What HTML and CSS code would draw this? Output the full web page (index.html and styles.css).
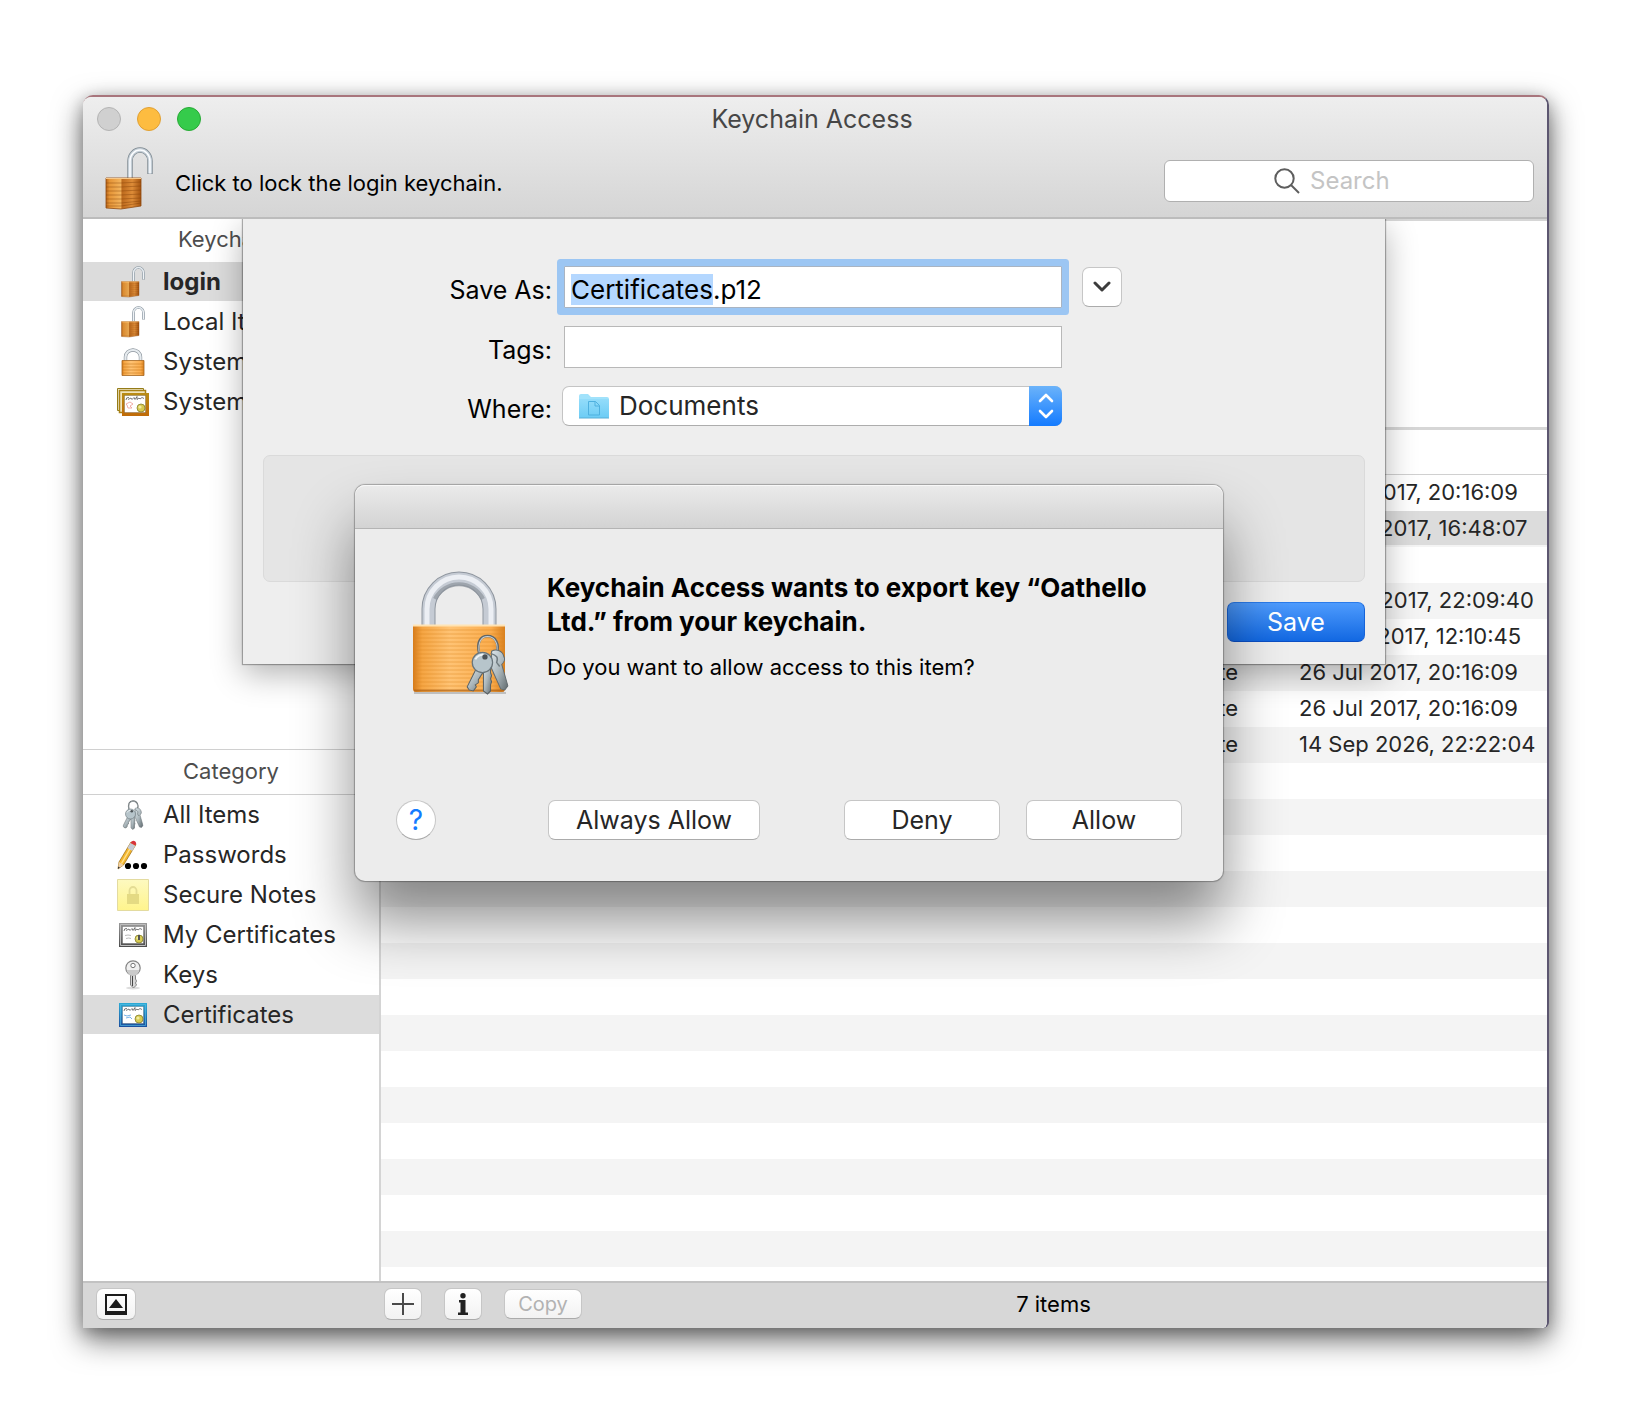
FILE: index.html
```html
<!DOCTYPE html>
<html lang="en">
<head>
<meta charset="utf-8">
<title>Keychain Access</title>
<link rel="stylesheet" href="styles.css">
</head>
<body>
<svg class="defs" aria-hidden="true">
  <defs>
    <linearGradient id="brass" x1="0" y1="0" x2="1" y2="0">
      <stop offset="0" stop-color="#b9661a"/><stop offset=".1" stop-color="#e59436"/><stop offset=".42" stop-color="#f3b35c"/><stop offset=".46" stop-color="#bd6a1d"/><stop offset=".75" stop-color="#dd8c38"/><stop offset="1" stop-color="#a4530f"/>
    </linearGradient>
    <linearGradient id="gold" x1="0" y1="0" x2="1" y2="0">
      <stop offset="0" stop-color="#d67a1a"/><stop offset=".1" stop-color="#f5a543"/><stop offset=".4" stop-color="#ffc374"/><stop offset=".85" stop-color="#fbad4e"/><stop offset="1" stop-color="#d9801e"/>
    </linearGradient>
    <linearGradient id="key" x1="0" y1="0" x2="1" y2="1">
      <stop offset="0" stop-color="#dde6ea"/><stop offset=".5" stop-color="#a9b5ba"/><stop offset="1" stop-color="#606a6e"/>
    </linearGradient>
    <linearGradient id="frame-blue" x1="0" y1="0" x2="0" y2="1"><stop offset="0" stop-color="#2cabd6"/><stop offset="1" stop-color="#1a4f9f"/></linearGradient>
    <linearGradient id="frame-gray" x1="0" y1="0" x2="0" y2="1"><stop offset="0" stop-color="#9a9a9a"/><stop offset="1" stop-color="#4c4c4c"/></linearGradient>
    <linearGradient id="frame-gold" x1="0" y1="0" x2="0" y2="1"><stop offset="0" stop-color="#b98d14"/><stop offset="1" stop-color="#c06a08"/></linearGradient>
    <linearGradient id="note" x1="0" y1="0" x2="0" y2="1"><stop offset="0" stop-color="#fdf9c0"/><stop offset="1" stop-color="#fff48c"/></linearGradient>
    <linearGradient id="folder" x1="0" y1="0" x2="0" y2="1"><stop offset="0" stop-color="#93dcfa"/><stop offset="1" stop-color="#6cccf5"/></linearGradient>

    <symbol id="lock-open" viewBox="0 0 48 64">
      <path d="M25 31V14a10 11 0 0 1 20 0V27" fill="none" stroke="#7d8890" stroke-width="5.400"/>
      <path d="M25 31V14a10 11 0 0 1 20 0V26.500" fill="none" stroke="#c3cdd5" stroke-width="4"/>
      <path d="M25 31V14a10 11 0 0 1 20 0V26.500" fill="none" stroke="#fbfdff" stroke-width="1.600"/>
      <path d="M1 31h35v28l-20 3-15-1z" fill="url(#brass)" stroke="#8f4a10" stroke-width=".8"/>
      <path d="M1 36h15l20-1M1 40h15l20-1M1 44h15l20-1M1 48h15l20-1M1 52h15l20-1M1 56h15l20-2M1 59h15l20-3" fill="none" stroke="#7c3c06" stroke-opacity=".4" stroke-width="1"/>
      <path d="M1 31.500h35" stroke="#f7c88a" stroke-width="1.200"/>
    </symbol>
    <symbol id="lock-closed" viewBox="0 0 24 28">
      <path d="M4.500 13V9a7.500 7 0 0 1 15 0v4" fill="none" stroke="#8c959d" stroke-width="3.400"/>
      <path d="M4.500 13V9a7.500 7 0 0 1 15 0v4" fill="none" stroke="#e6ebef" stroke-width="2.200"/>
      <path d="M1 12.500h22V27.500H1z" fill="url(#gold)" stroke="#a5661f" stroke-width=".8"/>
      <path d="M1 16h22M1 19h22M1 22h22M1 25h22" stroke="#c17418" stroke-opacity=".6" stroke-width=".9"/>
    </symbol>
    <symbol id="keyring" viewBox="0 0 42 60">
      <path d="M13 20C10 8 14 2 21 2c8 0 12 8 9 17" fill="none" stroke="#5f6669" stroke-width="2.600"/>
      <path d="M13 19C11 8 15 2.500 21 2.500c7 0 11 7 9 16" fill="none" stroke="#c9d0d3" stroke-width="1"/>
      <path d="M25 17c5-3 11 0 12 5 2 3 0 6-2 8l6 21-3 4-4-1-9-20z" fill="url(#key)" stroke="#636c70" stroke-width="1"/>
      <path d="M10 34 1 52l2 3 4 1 3-4-1-2 3-2 0-3 7-11z" fill="url(#key)" stroke="#596164" stroke-width="1"/>
      <path d="M17 30h7v8l1 3-1 3 1 3-1 3v6l-3 3-4-3z" fill="url(#key)" stroke="#596164" stroke-width="1"/>
      <path d="M24 19c6 2 8 4 6 9l3 4" fill="none" stroke="#717c81" stroke-width="1.400"/>
      <circle cx="16" cy="28" r="10" fill="#b7c5cb" stroke="#69757b" stroke-width="1.200"/>
      <path d="M9 25a8 8 0 0 1 10-4" fill="none" stroke="#eef3f5" stroke-width="2"/>
      <circle cx="18.500" cy="22.500" r="2.600" fill="#4c5356"/>
    </symbol>
    <symbol id="cert" viewBox="0 0 28 24">
      <path d="M3.500 3.500h21v17h-21z" fill="#fff" stroke="#00000055" stroke-width=".6"/>
      <path d="M5 8q0-3 3-2.500M7 7.500l3-1.500 1 1.500 2-2 1 2 2-3v3l2-1.500 1 1 2-1.500 2 1" fill="none" stroke="#222" stroke-width=".6"/>
      <circle cx="20" cy="16" r="4" fill="#d6ca50" stroke="#85802c" stroke-width=".8"/>
      <circle cx="19" cy="15" r="1.600" fill="#f1eca1"/>
    </symbol>
  </defs>
</svg>

<main class="window">
  <header class="toolbar">
    <div class="titlebar">
      <div class="lights">
        <button class="light light-close" aria-label="Close"></button>
        <button class="light light-min" aria-label="Minimise"></button>
        <button class="light light-zoom" aria-label="Zoom"></button>
      </div>
      <h1 class="title">Keychain Access</h1>
    </div>
    <div class="tools">
      <button class="lock-button" aria-label="Lock keychain"><svg width="48" height="64"><use href="#lock-open"/></svg></button>
      <p class="lock-text">Click to lock the login keychain.</p>
      <label class="search">
        <svg width="26" height="26" viewBox="0 0 26 26" fill="none" stroke="#5e5e5e" stroke-width="2"><circle cx="10.500" cy="10.500" r="9.200"/><path d="m17 17 8 8"/></svg>
        <input class="search-input" type="text" placeholder="Search" aria-label="Search">
      </label>
    </div>
  </header>

  <div class="content">
    <aside class="sidebar">
      <section class="group">
        <h2 class="group-title">Keychains</h2>
        <ul class="items">
          <li><a class="item is-selected is-bold" href="#login"><span class="icon"><svg width="24" height="32"><use href="#lock-open"/></svg></span>login</a></li>
          <li><a class="item" href="#local"><span class="icon"><svg width="24" height="32"><use href="#lock-open"/></svg></span>Local Items</a></li>
          <li><a class="item" href="#system"><span class="icon"><svg width="24" height="28"><use href="#lock-closed"/></svg></span>System</a></li>
          <li><a class="item" href="#roots"><span class="icon"><svg width="32" height="28" viewBox="0 0 32 28"><path d="M.5.500h26v22H.500z" fill="#f1ead0" stroke="#957c18"/><path d="M2.500 2.500h26v22h-26z" fill="#f1e4bc" stroke="#a98216" stroke-width="1.500"/><path d="M5 5h27v23H5z" fill="url(#frame-gold)"/><svg x="4" y="4" width="28" height="24"><use href="#cert"/></svg><path d="M9 16l4-2 3 2-3 2 2 2-4 0-1-3z" fill="none" stroke="#ee9a94" stroke-width=".8"/></svg></span>System Roots</a></li>
        </ul>
      </section>
      <section class="group group-category">
        <h2 class="group-title">Category</h2>
        <ul class="items">
          <li><a class="item" href="#all"><span class="icon"><svg width="22" height="30" viewBox="0 0 42 60"><use href="#keyring"/></svg></span>All Items</a></li>
          <li><a class="item" href="#passwords"><span class="icon"><svg width="32" height="30" viewBox="0 0 32 30"><path d="M2 22 14 2l5 2.500L6.500 25 1 29z" fill="#f4b72f" stroke="#9a6a14" stroke-width=".7"/><path d="m4.500 23.500 11.500-20" stroke="#ffe08a" stroke-width="1.500"/><path d="M2 22l4.500 3L1 29z" fill="#efcfa4"/><path d="M1 26.500v2.500l2-1.400z" fill="#333"/><path d="m10.500 8 4.800 3 3-5.200-4.800-3z" fill="#c5cad6"/><path d="M13.500 3Q15.500-.5 18 1.200 20 3 18.300 5.500z" fill="#d9323c"/><circle cx="11" cy="26" r="3.100"/><circle cx="19" cy="26" r="3.100"/><circle cx="27" cy="26" r="3.100"/></svg></span>Passwords</a></li>
          <li><a class="item" href="#notes"><span class="icon"><svg width="32" height="32" viewBox="0 0 32 32"><path d="M.5.500h31v31H.500z" fill="url(#note)" stroke="#e3dba0"/><path d="M10 15h12v10H10z" fill="#e4da83"/><path d="M12.500 15v-3.500a3.500 3.500 0 0 1 7 0V15" fill="none" stroke="#e4dc94" stroke-width="1.800"/></svg></span>Secure Notes</a></li>
          <li><a class="item" href="#mine"><span class="icon"><svg width="28" height="24" viewBox="0 0 28 24"><path d="M0 0h28v24H0z" fill="url(#frame-gray)"/><path d="M1.500 1.500h25v21h-25z" fill="none" stroke="#bdbdbd"/><use href="#cert"/><path d="M6 12.500q3-1 6 0M7 15.500q3-1 5 0" stroke="#bbb" fill="none"/><path d="M20 12v5" stroke="#555" stroke-width="2"/></svg></span>My Certificates</a></li>
          <li><a class="item" href="#keys"><span class="icon"><svg width="18" height="30" viewBox="0 0 18 30"><ellipse cx="9" cy="28" rx="7" ry="1.500" fill="#ddd"/><path d="M6.500 14h5v5l1 2-1 2 1 2-3 3-3-3z" fill="#d8d8d8" stroke="#777" stroke-width=".9"/><path d="M8.500 15v11" stroke="#444"/><circle cx="9" cy="8" r="7.200" fill="#f0f0f0" stroke="#858585" stroke-width="1.200"/><path d="M3 10h12a6 6 0 0 1-12 0z" fill="#cacaca"/><circle cx="9" cy="5.500" r="2.200" fill="#fff" stroke="#777"/></svg></span>Keys</a></li>
          <li><a class="item is-selected" href="#certificates"><span class="icon"><svg width="28" height="24" viewBox="0 0 28 24"><path d="M0 0h28v24H0z" fill="url(#frame-blue)"/><path d="M1.500 1.500h25v21h-25z" fill="none" stroke="#5cc2e4" stroke-opacity=".6"/><use href="#cert"/><path d="M5 12l3 1 4-1M7 15l4-1 2 2" stroke="#7ab3e6" fill="none"/></svg></span>Certificates</a></li>
        </ul>
      </section>
    </aside>

    <section class="browser">
      <div class="preview"></div>
      <div class="list">
        <table class="certs">
          <colgroup><col><col class="col-kind"><col class="col-date"></colgroup>
          <thead><tr><th></th><th></th><th></th></tr></thead>
          <tbody>
            <tr><td></td><td></td><td>26 Jul 2017, 20:16:09</td></tr>
            <tr class="is-current"><td></td><td></td><td>26 Aug 2017, 16:48:07</td></tr>
            <tr><td></td><td></td><td></td></tr>
            <tr><td></td><td></td><td>24 Aug 2017, 22:09:40</td></tr>
            <tr><td></td><td></td><td>20 Jun 2017, 12:10:45</td></tr>
            <tr><td></td><td>certificate</td><td>26 Jul 2017, 20:16:09</td></tr>
            <tr><td></td><td>certificate</td><td>26 Jul 2017, 20:16:09</td></tr>
            <tr><td></td><td>certificate</td><td>14 Sep 2026, 22:22:04</td></tr>
          </tbody>
        </table>
      </div>
    </section>

    <form class="sheet">
      <div class="fields">
        <label class="label" for="save-as">Save As:</label>
        <input class="field" id="save-as" type="text" value="Certificates.p12" autofocus>
        <button class="button button-square" type="button" aria-label="Expand"><svg width="18" height="12" viewBox="0 0 18 12" fill="none" stroke="#3c3c3c" stroke-width="3" stroke-linecap="round" stroke-linejoin="round"><path d="m2 2 7 7 7-7"/></svg></button>
        <label class="label" for="tags">Tags:</label>
        <input class="field" id="tags" type="text">
        <label class="label label-where" for="where">Where:</label>
        <div class="popup">
          <select class="popup-select" id="where"><option>Documents</option></select>
          <svg class="popup-folder" width="30" height="25" viewBox="0 0 30 25"><path d="M0 2q0-2 2-2h7l3 3h16q2 0 2 2v18q0 1-1 1H1q-1 0-1-1z" fill="#a1e2fb"/><path d="M0 5h30v18q0 1-1 1H1q-1 0-1-1z" fill="url(#folder)"/><path d="M0 24h30" stroke="#58aed6"/><path d="M9.500 7.500h7l4 4v9.500h-11zM16 7.500v4.500h4.500" fill="none" stroke="#4eb0df"/></svg>
          <span class="popup-arrows"><svg width="18" height="26" viewBox="0 0 18 26" fill="none" stroke="#fff" stroke-width="2.600" stroke-linecap="round" stroke-linejoin="round"><path d="m3 8 6-6 6 6M3 18l6 6 6-6"/></svg></span>
        </div>
      </div>
      <div class="options"></div>
      <div class="sheet-actions"><button class="button button-primary" type="button">Save</button></div>
    </form>
  </div>

  <footer class="statusbar">
    <div class="status-side"><button class="button mini mini-toggle" aria-label="Toggle preview"><svg width="22" height="21" viewBox="0 0 22 21"><path d="M1 1h20v19H1z" fill="none" stroke="#1a1a1a" stroke-width="2"/><path d="M0 17h22v4H0zM4 14l7-9 7 9z" fill="#1a1a1a"/></svg></button></div>
    <div class="status-main">
      <button class="button mini" aria-label="Add"><svg width="22" height="22" viewBox="0 0 22 22" stroke="#4a4a4a" stroke-width="2"><path d="M11 0v22M0 11h22"/></svg></button>
      <button class="button mini" aria-label="Info"><svg width="10" height="22" viewBox="0 0 10 22" fill="#222"><circle cx="5" cy="2.700" r="2.700"/><path d="M1 7h6.500v12.500H10V22H0v-2.500h2.500v-10H1z"/></svg></button>
      <button class="button mini mini-copy" disabled>Copy</button>
      <p class="count">7 items</p>
    </div>
  </footer>

  <section class="alert" role="alertdialog" aria-labelledby="alert-title">
    <div class="alert-bar"></div>
    <div class="alert-body">
      <svg class="alert-icon" width="96" height="124" viewBox="0 -2 96 124">
        <path d="M15.500 54V36a30.500 30.500 0 0 1 61 0v18" fill="none" stroke="#8f969f" stroke-width="14"/>
        <path d="M15.500 54V36a30.500 30.500 0 0 1 61 0v18" fill="none" stroke="#c5cbd4" stroke-width="12"/>
        <path d="M14 54V36a32 32 0 0 1 64 0v18" fill="none" stroke="#eceff4" stroke-width="5"/>
        <path d="M22 26a27 27 0 0 1 48 0" fill="none" stroke="#8d949d" stroke-opacity=".7" stroke-width="4"/>
        <path d="M1 119h92v2H1z" fill="#00000030"/>
        <path d="M0 52h92v64q0 3-3 3H3q-3 0-3-3z" fill="url(#gold)"/>
        <path d="M0 57h92M0 61h92M0 65h92M0 69h92M0 73h92M0 77h92M0 81h92M0 85h92M0 89h92M0 93h92M0 97h92M0 101h92M0 105h92M0 109h92M0 113h92" stroke="#d98520" stroke-opacity=".45"/>
        <path d="M0 52.500h92" stroke="#ffe3b3" stroke-width="2"/>
        <path d="M1 117.500h90" stroke="#ad6013" stroke-opacity=".7" stroke-width="2"/>
        <svg x="53" y="61" width="43" height="61" viewBox="0 0 42 60"><use href="#keyring"/></svg>
      </svg>
      <div class="alert-text">
        <h2 class="alert-title" id="alert-title">Keychain Access wants to export key “Oathello Ltd.” from your keychain.</h2>
        <p class="alert-message">Do you want to allow access to this item?</p>
      </div>
    </div>
    <div class="alert-actions">
      <button class="button button-help" aria-label="Help">?</button>
      <button class="button button-always">Always Allow</button>
      <button class="button button-wide button-deny">Deny</button>
      <button class="button button-wide">Allow</button>
    </div>
  </section>
</main>
<script src="script.js"></script>
</body>
</html>
```
FILE: styles.css
```css
* { box-sizing: border-box; }

body {
  margin: 0;
  min-height: 100vh;
  padding: 95px 86px 93px 83px;
  display: flex;
  flex-direction: column;
  background: #fff;
  color: #262626;
  font: 25px/32px Inter, "Liberation Sans", sans-serif;
}

h1, h2, p, ul { margin: 0; padding: 0; font-weight: 400; }
ul { list-style: none; }
button, input, select { font: inherit; color: inherit; margin: 0; padding: 0; }
a { color: inherit; text-decoration: none; }
svg { display: block; flex: none; }
.defs { position: absolute; width: 0; height: 0; }

.window {
  position: relative;
  flex: 1;
  display: flex;
  flex-direction: column;
  border-top: 2px solid #a8757c;
  border-right: 2px solid #5c5670;
  border-radius: 10px 10px 6px 0;
  background: #fff;
  box-shadow: 0 12px 30px rgba(0, 0, 0, .55), 0 4px 16px rgba(0, 0, 0, .25);
}

/* Title bar and toolbar */
.toolbar {
  border-bottom: 2px solid #bcbcbc;
  border-radius: 8px 8px 0 0;
  background: linear-gradient(#eee, #d5d5d5);
}
.titlebar { display: grid; grid-template-columns: 1fr auto 1fr; align-items: center; height: 44px; padding: 0 20px 0 14px; }
.lights { display: flex; gap: 16px; }
.light { width: 24px; height: 24px; border: 1px solid; border-radius: 50%; }
.light-close { background: #d0d0d0; border-color: #b4b4b4; }
.light-min { background: #fdbc40; border-color: #e0a034; }
.light-zoom { background: #35cb4b; border-color: #27aa35; }
.title { color: #464646; font-size: 25px; }
.tools { display: flex; align-items: center; height: 76px; padding: 0 13px 0 22px; }
.lock-button { padding: 0; border: 0; background: none; }
.lock-text { margin: 8px auto 0 22px; color: #000; font-size: 22px; }
.search {
  display: flex;
  align-items: center;
  justify-content: center;
  gap: 10px;
  width: 370px;
  height: 42px;
  margin-top: 4px;
  border: 1px solid #b0b0b0;
  border-radius: 6px;
  background: #fff;
}
.search-input { width: 114px; border: 0; outline: 0; background: none; font-size: 24px; }
.search-input::placeholder { color: #c4c4c4; opacity: 1; }

/* Sidebar */
.content { position: relative; flex: 1; display: flex; overflow: hidden; }
.sidebar { flex: none; width: 298px; display: grid; grid-template-rows: 1fr 1fr; border-right: 2px solid #d4d4d4; }
.group-title { height: 43px; color: #4d4d4d; font-size: 22px; line-height: 41px; text-align: center; }
.group-category { margin-top: -1px; border-top: 1px solid #d0d0d0; }
.group-category .group-title { height: 45px; border-bottom: 1px solid #d0d0d0; line-height: 43px; }
.item { display: flex; align-items: center; gap: 14px; height: 39px; margin-bottom: 1px; padding-left: 34px; font-size: 24px; }
.icon { display: flex; justify-content: center; width: 32px; }
.is-selected { background: #dcdcdc; }
.is-bold { font-weight: 700; }

/* Certificate list */
.browser { flex: 1; display: flex; flex-direction: column; }
.preview { height: 211px; border-top: 2px solid #d6d6d6; border-bottom: 3px solid #d6d6d6; }
.list { flex: 1; background: repeating-linear-gradient(#fff 0 9px, #f4f4f4 9px 45px, #fff 45px 72px); }
.certs { width: 100%; table-layout: fixed; border-spacing: 0; font-size: 22px; }
.col-kind { width: 166px; }
.col-date { width: 248px; }
.certs th { height: 45px; padding: 0; border-bottom: 1px solid #d0d0d0; background: #fff; }
.certs td { height: 36px; padding: 0 0 2px; line-height: 32px; white-space: nowrap; }
.is-current td { background: linear-gradient(#dcdcdc 34px, #f4f4f4 34px); }

/* Save sheet */
.sheet {
  position: absolute;
  top: 0;
  left: 50%;
  width: 1142px;
  margin-left: -572px;
  padding: 40px 20px 22px;
  background: #eee;
  box-shadow: 0 0 1px 1px rgba(0, 0, 0, .3), 0 10px 30px rgba(0, 0, 0, .3);
  color: #000;
}
.fields {
  display: grid;
  grid-template-columns: 289px 498px 40px;
  column-gap: 12px;
  row-gap: 18px;
  align-items: center;
  padding-top: 7px;
}
.fields .button-square { margin-left: 8px; }
.label { padding-top: 6px; text-align: right; }
.label-where { grid-column: 1; }
.field { width: 100%; height: 42px; padding: 4px 6px 0; border: 1px solid #b8b8b8; outline: 0; background: #fff; font-size: 26px; }
.fields .field:focus { border-color: #a9b4c2; box-shadow: 0 0 0 7px #9cc6f3; border-radius: 1px; }
.field::selection { background: #b4d7ff; color: #000; }
.popup { position: relative; height: 40px; margin-left: -2px; }
.popup-select {
  width: 100%;
  height: 40px;
  padding-left: 56px;
  border: 1px solid #c4c4c4;
  border-bottom-color: #adadad;
  border-radius: 7px;
  background: #fff;
  color: #262626;
  font-size: 26px;
  appearance: none;
}
.popup-folder { position: absolute; left: 17px; top: 8px; pointer-events: none; }
.popup-arrows {
  position: absolute;
  top: 0;
  right: 0;
  display: grid;
  place-items: center;
  width: 33px;
  height: 40px;
  border-radius: 0 7px 7px 0;
  background: linear-gradient(#6bb3fa, #147bff);
  pointer-events: none;
}
.options { height: 127px; margin-top: 29px; border: 1px solid #dadada; border-radius: 7px; background: #e5e5e5; }
.sheet-actions { display: flex; justify-content: flex-end; margin-top: 20px; }

/* Buttons */
.button {
  display: flex;
  align-items: center;
  justify-content: center;
  height: 40px;
  border: 1px solid #c6c6c6;
  border-bottom-color: #ababab;
  border-radius: 7px;
  background: #fff;
  color: #262626;
}
.button-square { width: 40px; }
.button-primary { width: 138px; border-color: #2a7bea #1663d8 #0b4fc4; background: linear-gradient(#4e9bfd, #1268e2); color: #fff; }
.button-wide { width: 156px; }
.button-always { width: 212px; }
.button-help { width: 40px; border-radius: 50%; color: #147bff; font-size: 28px; }

/* Status bar */
.statusbar { display: flex; align-items: center; height: 47px; padding-bottom: 3px; border-top: 2px solid #c2c2c2; border-radius: 0 0 6px 0; background: #d7d7d7; }
.status-side { width: 301px; padding-left: 13px; }
.status-main { flex: 1; display: flex; align-items: center; gap: 22px; }
.mini { width: 38px; height: 32px; background: linear-gradient(#fff, #f2f2f2); }
.mini-toggle { width: 40px; }
.mini-copy { width: 78px; height: 30px; color: #b2b2b2; font-size: 20px; }
.count { flex: 1; padding-right: 44px; color: #000; font-size: 22px; text-align: center; }

/* Export alert */
.alert {
  position: absolute;
  top: 388px;
  left: 50%;
  width: 868px;
  margin-left: -460px;
  border-radius: 10px;
  background: #ececec;
  box-shadow: 0 0 1px 1px rgba(0, 0, 0, .28), 0 40px 60px rgba(0, 0, 0, .45);
  color: #000;
}
.alert-bar { height: 44px; border-bottom: 1px solid #b4b4b4; border-radius: 10px 10px 0 0; background: linear-gradient(#ebebeb, #d3d3d3); box-shadow: inset 0 1px #f8f8f8; }
.alert-body { display: flex; gap: 38px; height: 271px; padding: 42px 40px 0 58px; }
.alert-title { font-size: 26px; font-weight: 700; line-height: 34px; }
.alert-message { margin-top: 12px; font-size: 22px; }
.alert-actions { display: flex; gap: 26px; padding: 0 41px 41px; }
.button-always { margin-left: 86px; }
.button-deny { margin-left: auto; }
```
FILE: script.js
```js
// Preselect the file name without its extension.
const nameField = document.getElementById('save-as');
nameField.focus();
nameField.setSelectionRange(0, nameField.value.lastIndexOf('.'));
```
